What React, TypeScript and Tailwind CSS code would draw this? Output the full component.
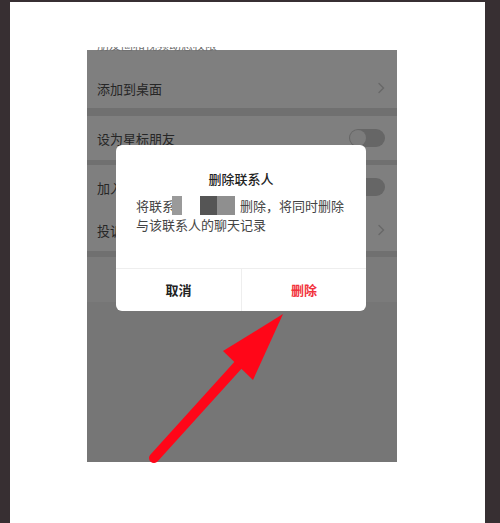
// App.tsx - screenshot of a chat-app "delete contact" confirm dialog with a red pointer arrow

const font = { fontFamily: '"Noto Sans CJK SC", "Noto Sans", sans-serif' };

function Toggle() {
  return (
    <div className="flex h-[18px] w-[36px] items-center rounded-full bg-[#666666] px-[1px]">
      <div className="h-[16px] w-[16px] rounded-full bg-[#7c7c7c]" />
    </div>
  );
}

function Chevron() {
  return (
    <svg width="8" height="12" viewBox="0 0 8 12" fill="none">
      <path d="M2 1.5 L6.5 6 L2 10.5" stroke="#686868" strokeWidth="1.4" strokeLinecap="round" />
    </svg>
  );
}

function Row({ label, right, h }: { label: string; right?: React.ReactNode; h: string }) {
  return (
    <div className={`flex items-center justify-between bg-[#7f7f7f] pl-[10px] pr-[12px] ${h}`}>
      <span className="text-[13px] leading-none text-[#262626]">{label}</span>
      {right}
    </div>
  );
}

function Dialog() {
  return (
    <div className="absolute left-[29px] top-[95px] w-[250px] overflow-hidden rounded-[6px] bg-white">
      <div className="px-[20px] pt-[24px] pb-[34px]">
        <p className="text-center text-[13px] font-medium leading-[20px] text-[#222]">删除联系人</p>
        <p className="mt-[7px] text-[13px] leading-[19px] text-[#444]">
          将联系人
          <span className="relative inline-block w-[52px] align-top">
            &nbsp;
            {/* mosaic covering the contact name */}
            <span className="absolute left-[-16px] top-0 h-[19px] w-[10px] bg-[#9a9a9a]" />
            <span className="absolute left-[-6px] top-0 h-[19px] w-[18px] bg-white" />
            <span className="absolute left-[12px] top-0 h-[19px] w-[17px] bg-[#555]" />
            <span className="absolute left-[29px] top-0 h-[19px] w-[18px] bg-[#8f8f8f]" />
          </span>
          删除，将同时删除
          <br />
          与该联系人的聊天记录
        </p>
      </div>
      <div className="grid h-[43px] grid-cols-2 border-t border-[#eeeeee]">
        <button className="text-[13px] font-bold text-[#222]">取消</button>
        <button className="border-l border-[#eeeeee] text-[13px] font-bold text-[#f2333d]">删除</button>
      </div>
    </div>
  );
}

export default function App() {
  return (
    <div className="relative h-[523px] w-[500px] bg-[#372f32] pl-[10px] pr-[15px] pt-[2px]" style={font}>
      <div className="h-full w-full bg-white pl-[77px] pt-[48px]">
        <div className="relative flex h-[412px] w-[310px] flex-col bg-[#767676]">
          {/* bottom edge of a row label scrolled off the top */}
          <div className="h-[18px] bg-[#7f7f7f]">
            <div className="-mt-[3px] h-[4px] overflow-hidden pl-[10px]">
              <span className="block -translate-y-[9px] text-[12px] leading-[13px] text-[#6e6e6e]">朋友圈和视频动态权限</span>
            </div>
          </div>
          <Row label="添加到桌面" h="h-[40px]" right={<Chevron />} />
          <div className="h-[8px] bg-[#707070]" />
          <Row label="设为星标朋友" h="h-[44px]" right={<Toggle />} />
          <div className="h-[5px] bg-[#707070]" />
          <Row label="加入黑名单" h="h-[44px]" right={<Toggle />} />
          <Row label="投诉" h="h-[42px]" right={<Chevron />} />
          <div className="h-[6px] bg-[#707070]" />
          <div className="h-[45px] bg-[#7b7b7b]" />
          <Dialog />
        </div>
      </div>
      <svg className="pointer-events-none absolute left-0 top-0" width="500" height="523" viewBox="0 0 500 523">
        <line x1="154" y1="458" x2="250" y2="352" stroke="#ff0618" strokeWidth="10" strokeLinecap="round" />
        <polygon points="283,314 223,351 253,380" fill="#ff0618" />
      </svg>
    </div>
  );
}
